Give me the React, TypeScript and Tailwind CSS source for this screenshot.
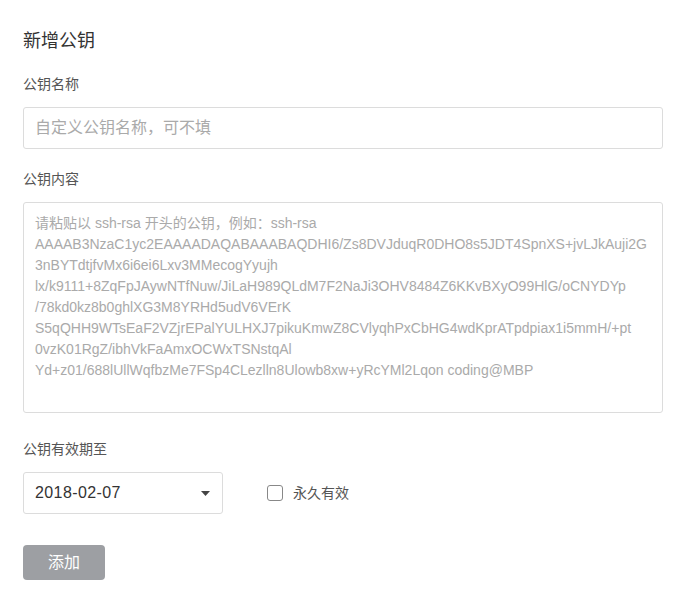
import { useState } from "react";

const FONT = "font-['Liberation_Sans','Noto_Sans_CJK_SC',sans-serif]";

const KEY_PLACEHOLDER = [
  "请粘贴以 ssh-rsa 开头的公钥，例如：ssh-rsa",
  "AAAAB3NzaC1yc2EAAAADAQABAAABAQDHI6/Zs8DVJduqR0DHO8s5JDT4SpnXS+jvLJkAuji2G",
  "3nBYTdtjfvMx6i6ei6Lxv3MMecogYyujh",
  "lx/k9111+8ZqFpJAywNTfNuw/JiLaH989QLdM7F2NaJi3OHV8484Z6KKvBXyO99HlG/oCNYDYp",
  "/78kd0kz8b0ghlXG3M8YRHd5udV6VErK",
  "S5qQHH9WTsEaF2VZjrEPalYULHXJ7pikuKmwZ8CVlyqhPxCbHG4wdKprATpdpiax1i5mmH/+pt",
  "0vzK01RgZ/ibhVkFaAmxOCWxTSNstqAl",
  "Yd+z01/688lUllWqfbzMe7FSp4CLezlln8Ulowb8xw+yRcYMl2Lqon coding@MBP",
].join("\n");

function Label({ children }: { children: string }) {
  return <div className="text-[14px] leading-[20px] text-[#555]">{children}</div>;
}

export default function App() {
  const [forever, setForever] = useState(false);

  return (
    <div className={`${FONT} min-h-[605px] bg-white px-[23px] pt-[28px] text-[#333]`}>
      <h2 className="text-[18px] leading-[26px] text-[#333]">新增公钥</h2>

      <div className="mt-[20px] flex flex-col gap-[13px]">
        <Label>公钥名称</Label>
        <input
          className="h-[42px] w-[640px] rounded-[3px] border border-[#dcdcdc] px-[11px] text-[16px] outline-none placeholder:text-[#aaa]"
          placeholder="自定义公钥名称，可不填"
        />
      </div>

      <div className="mt-[20px] flex flex-col gap-[13px]">
        <Label>公钥内容</Label>
        <textarea
          className="h-[211px] w-[640px] resize-none rounded-[3px] border border-[#dcdcdc] px-[11px] py-[10px] text-[14px] leading-[21px] outline-none placeholder:text-[#aaa]"
          placeholder={KEY_PLACEHOLDER}
        />
      </div>

      <div className="mt-[26px] flex flex-col gap-[13px]">
        <Label>公钥有效期至</Label>
        <div className="flex items-center">
          <div className="flex h-[42px] w-[200px] items-center justify-between rounded-[3px] border border-[#dcdcdc] pr-[12px] pl-[11px]">
            <span className="text-[16px] tracking-[0.4px] text-[#333]">2018-02-07</span>
            <svg width="9" height="5" viewBox="0 0 9 5">
              <path d="M0 0h9L4.5 5z" fill="#444" />
            </svg>
          </div>
          <label className="ml-[44px] flex cursor-pointer items-center gap-[10px]">
            <span
              onClick={() => setForever(!forever)}
              className="h-[16px] w-[16px] rounded-[3px] border border-[#888] bg-white"
            />
            <span className="text-[14px] text-[#555]">永久有效</span>
          </label>
        </div>
      </div>

      <button className="mt-[31px] h-[35px] w-[82px] rounded-[4px] bg-[#9d9fa3] text-[16px] text-white">
        添加
      </button>
    </div>
  );
}
